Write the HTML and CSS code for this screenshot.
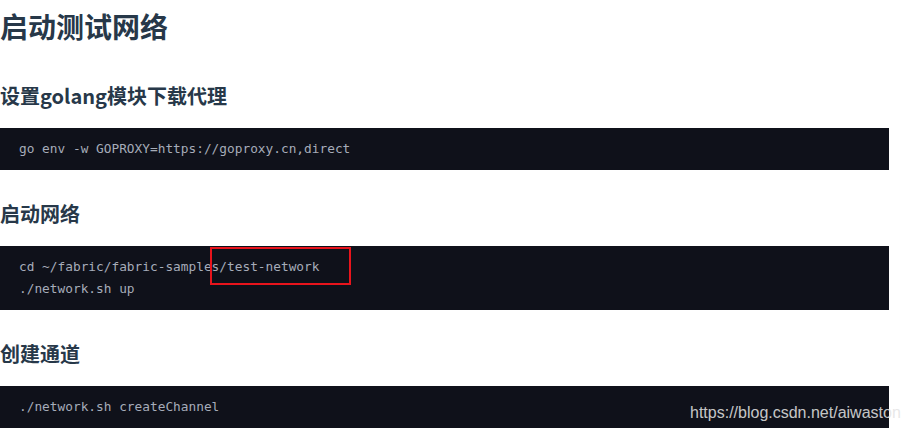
FILE: index.html
```html
<!DOCTYPE html>
<html lang="zh-CN">
<head>
<meta charset="utf-8">
<title>启动测试网络</title>
<link rel="stylesheet" href="styles.css">
</head>
<body>
<main class="doc">
  <h1 class="title">启动测试网络</h1>
  <h2 class="section">设置golang模块下载代理</h2>
  <pre class="code"><code>go env -w GOPROXY=https://goproxy.cn,direct</code></pre>
  <h2 class="section">启动网络</h2>
  <pre class="code code-marked"><code>cd ~/fabric/fabric-samples/test-network
./network.sh up</code><span class="mark-box"></span></pre>
  <h2 class="section">创建通道</h2>
  <pre class="code"><code>./network.sh createChannel</code></pre>
  <div class="watermark">https://blog.csdn.net/aiwaston</div>
</main>
</body>
</html>
```

FILE: styles.css
```css
html, body {
  margin: 0;
  padding: 0;
  background: #ffffff;
}

.doc {
  position: relative;
  width: 889px;
  font-family: "Noto Sans CJK SC", "Noto Sans", sans-serif;
  color: #273849;
  display: flex;
  flex-direction: column;
}

.title {
  margin: 8px 0 0;
  font-size: 28px;
  line-height: 36px;
  font-weight: 700;
}

.section {
  margin: 29px 0 0;
  font-size: 20px;
  line-height: 30px;
  font-weight: 700;
}

.title + .section {
  margin-top: 37px;
}

.code {
  position: relative;
  margin: 17px 0 0;
  padding: 10px 19px;
  background: #0f111a;
  color: #a6acb9;
  font-family: "DejaVu Sans Mono", "Liberation Mono", monospace;
  font-size: 12.8px;
  line-height: 22px;
  white-space: pre;
}

.code code {
  font-family: inherit;
}

.mark-box {
  position: absolute;
  left: 210px;
  top: 1px;
  width: 137px;
  height: 34px;
  border: 2px solid #e8141c;
}

.watermark {
  position: absolute;
  left: 690px;
  top: 403px;
  font-family: "Liberation Sans", Arial, sans-serif;
  font-size: 16px;
  line-height: 20px;
  color: rgba(228, 228, 228, 0.87);
  white-space: nowrap;
}
```
